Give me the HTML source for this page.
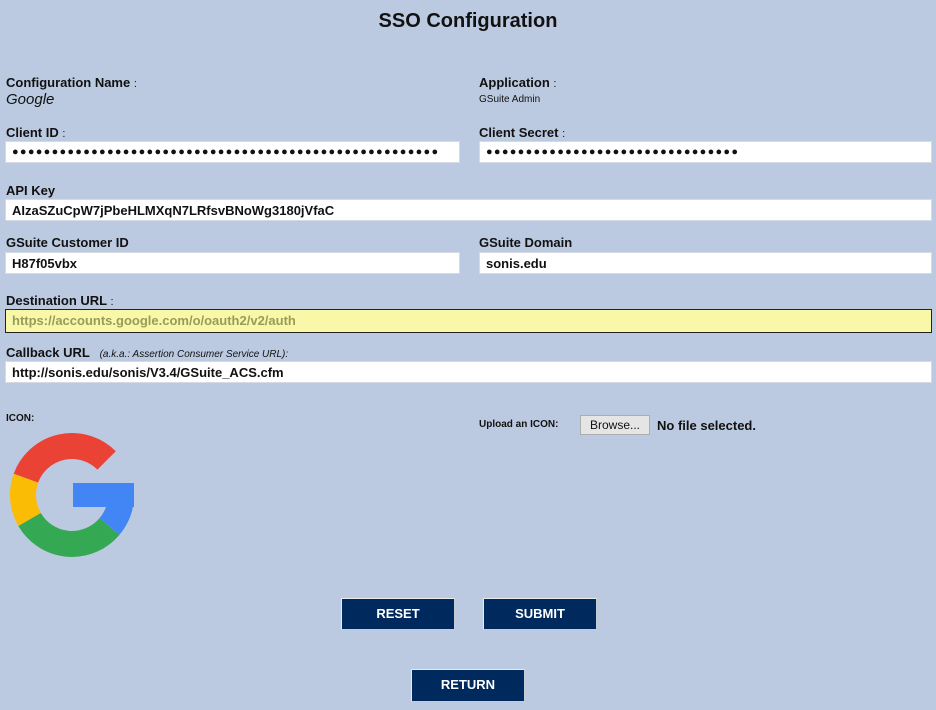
<!DOCTYPE html>
<html><head><meta charset="utf-8"><style>
body{margin:0;width:936px;height:710px;background:#bccae1;font-family:"Liberation Sans",Arial,sans-serif;position:relative;overflow:hidden;color:#111}
.a{position:absolute;white-space:nowrap}
.l{font-size:13px;font-weight:bold}
.l span{font-weight:normal;font-size:11px}
.in{position:absolute;background:#fff;border:1px solid #d6dbe3;height:22px;box-sizing:border-box;font-size:13px;font-weight:bold;line-height:21px;padding-left:6px;color:#111}
.dots{font-size:11px;letter-spacing:1.27px;line-height:21px}
.btn{position:absolute;background:#002a5e;color:#fff;font-weight:bold;font-size:13px;text-align:center;line-height:30px;height:32px;box-sizing:border-box;border:1px solid #c8ccd4;border-top-color:#e8eaee;border-left-color:#e8eaee}
</style></head><body>
<div class="a" style="left:0;width:936px;text-align:center;top:10px;font-size:20px;font-weight:bold">SSO Configuration</div>

<div class="a l" style="left:6px;top:75px">Configuration Name <span>:</span></div>
<div class="a" style="left:6px;top:91px;font-size:15px;font-style:italic">Google</div>
<div class="a l" style="left:479px;top:75px">Application <span>:</span></div>
<div class="a" style="left:479px;top:94px;font-size:10px">GSuite Admin</div>

<div class="a l" style="left:6px;top:125px">Client ID <span>:</span></div>
<div class="in dots" style="left:5px;top:141px;width:455px">●●●●●●●●●●●●●●●●●●●●●●●●●●●●●●●●●●●●●●●●●●●●●●●●●●●●●●</div>
<div class="a l" style="left:479px;top:125px">Client Secret <span>:</span></div>
<div class="in dots" style="left:479px;top:141px;width:453px">●●●●●●●●●●●●●●●●●●●●●●●●●●●●●●●●</div>

<div class="a l" style="left:6px;top:183px">API Key</div>
<div class="in" style="left:5px;top:199px;width:927px">AIzaSZuCpW7jPbeHLMXqN7LRfsvBNoWg3180jVfaC</div>

<div class="a l" style="left:6px;top:235px">GSuite Customer ID</div>
<div class="in" style="left:5px;top:252px;width:455px">H87f05vbx</div>
<div class="a l" style="left:479px;top:235px">GSuite Domain</div>
<div class="in" style="left:479px;top:252px;width:453px">sonis.edu</div>

<div class="a l" style="left:6px;top:293px">Destination URL <span>:</span></div>
<div class="in" style="left:5px;top:309px;width:927px;height:24px;background:#f8f8a8;border:1px solid #222;color:#9a9a5a">https://accounts.google.com/o/oauth2/v2/auth</div>

<div class="a l" style="left:6px;top:345px">Callback URL &nbsp;<span style="font-style:italic;font-size:10px">&nbsp;(a.k.a.: Assertion Consumer Service URL):</span></div>
<div class="in" style="left:5px;top:361px;width:927px">http://sonis.edu/sonis/V3.4/GSuite_ACS.cfm</div>

<div class="a" style="left:6px;top:413px;font-size:10px;font-weight:bold">ICON:</div>
<svg class="a" style="left:0;top:0" width="150" height="600">
<g fill="none" stroke-width="26">
<path d="M106.6 460.4 A49 49 0 0 0 25.9 478.2" stroke="#ea4335"/>
<path d="M25.9 478.2 A49 49 0 0 0 29.6 519.5" stroke="#fbbc05"/>
<path d="M29.6 519.5 A49 49 0 0 0 109.5 526.5" stroke="#34a853"/>
<path d="M109.5 526.5 A49 49 0 0 0 121 495" stroke="#4285f4"/>
</g>
<rect x="73" y="483" width="61" height="24" fill="#4285f4"/>
</svg>

<div class="a" style="left:479px;top:419px;font-size:10px;font-weight:bold">Upload an ICON:</div>
<div class="a" style="left:580px;top:415px;width:70px;height:20px;box-sizing:border-box;background:#e5e5e5;border:1px solid #adadad;font-size:12px;text-align:center;line-height:18px">Browse...</div>
<div class="a" style="left:657px;top:418px;font-size:13px;font-weight:bold">No file selected.</div>

<div class="btn" style="left:341px;top:598px;width:114px">RESET</div>
<div class="btn" style="left:483px;top:598px;width:114px">SUBMIT</div>
<div class="btn" style="left:411px;top:669px;width:114px;height:33px">RETURN</div>
</body></html>
